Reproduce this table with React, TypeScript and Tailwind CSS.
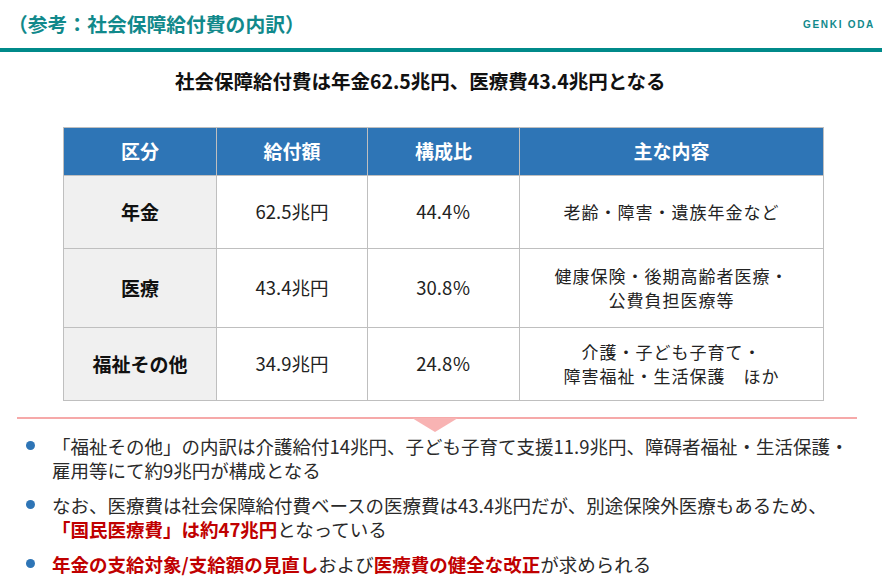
import React from "react";

const jp = { fontFamily: '"Noto Sans CJK JP", "Noto Sans", sans-serif' };

export default function App() {
  const rows = [
    { k: "年金", a: "62.5兆円", p: "44.4％", c: ["老齢・障害・遺族年金など"], h: "h-[73px]" },
    { k: "医療", a: "43.4兆円", p: "30.8％", c: ["健康保険・後期高齢者医療・", "公費負担医療等"], h: "h-[79px]" },
    { k: "福祉その他", a: "34.9兆円", p: "24.8％", c: ["介護・子ども子育て・", "障害福祉・生活保護　ほか"], h: "h-[73px]" },
  ];
  return (
    <div className="w-[882px] h-[576px] bg-white overflow-hidden text-[#222]" style={jp}>
      <div className="flex h-[48px] items-center justify-between pl-[8px] pr-[7px]">
        <div className="text-[19.8px] font-bold text-[#11898b]">（参考：社会保障給付費の内訳）</div>
        <div
          className="text-[10px] font-bold text-[#11898b] tracking-[1.7px] pt-[1px]"
          style={{ fontFamily: '"Liberation Sans", Arial, sans-serif' }}
        >
          GENKI ODA
        </div>
      </div>
      <div className="h-[4px] bg-[#008a8a]" />
      <div className="pt-[15px] pl-[175px] text-[19.5px] font-bold leading-[28px] text-[#111]">
        社会保障給付費は年金62.5兆円、医療費43.4兆円となる
      </div>
      <div className="pt-[32px] pl-[63px]">
        <table className="border-collapse w-[760px] table-fixed">
          <colgroup>
            <col className="w-[153px]" />
            <col className="w-[151px]" />
            <col className="w-[152px]" />
            <col className="w-[304px]" />
          </colgroup>
          <thead>
            <tr className="h-[48px] bg-[#2e75b6] text-white">
              {["区分", "給付額", "構成比", "主な内容"].map((t) => (
                <th key={t} className="border-[1.5px] border-[#bfbfbf] text-[19px] font-bold text-center">
                  {t}
                </th>
              ))}
            </tr>
          </thead>
          <tbody>
            {rows.map((r) => (
              <tr key={r.k} className={r.h}>
                <td className="border-[1.5px] border-[#bfbfbf] bg-[#f0f0f0] text-center text-[19px] font-bold text-[#111]">
                  {r.k}
                </td>
                <td className="border-[1.5px] border-[#bfbfbf] text-center text-[18.5px] text-[#222]">{r.a}</td>
                <td className="border-[1.5px] border-[#bfbfbf] text-center text-[18.5px] text-[#222]">{r.p}</td>
                <td className="border-[1.5px] border-[#bfbfbf] text-center text-[17px] leading-[24px] tracking-[1px] text-[#222]">
                  {r.c.map((l, i) => (
                    <div key={i}>{l}</div>
                  ))}
                </td>
              </tr>
            ))}
          </tbody>
        </table>
      </div>
      <div className="relative mt-[16px] ml-[17px] w-[840px] h-[2px] bg-[#f6a9a9]">
        <div className="absolute left-[395px] top-[1px] w-0 h-0 border-l-[23px] border-r-[23px] border-t-[14px] border-l-transparent border-r-transparent border-t-[#f8b3b3]" />
      </div>
      <div className="pt-[15px] pl-[26px] flex flex-col gap-[11px] text-[18.5px] leading-[24px] text-[#2a2a2a]">
        <div className="flex items-start">
          <span className="mt-[7px] w-[9px] h-[9px] rounded-full bg-[#2e75b6] shrink-0" />
          <div className="ml-[17px] whitespace-nowrap">
            「福祉その他」の内訳は介護給付14兆円、子ども子育て支援11.9兆円、障碍者福祉・生活保護・
            <br />
            雇用等にて約9兆円が構成となる
          </div>
        </div>
        <div className="flex items-start">
          <span className="mt-[7px] w-[9px] h-[9px] rounded-full bg-[#2e75b6] shrink-0" />
          <div className="ml-[17px] whitespace-nowrap">
            なお、医療費は社会保障給付費ベースの医療費は43.4兆円だが、別途保険外医療もあるため、
            <br />
            <span className="font-bold text-[#c00000]">「国民医療費」は約47兆円</span>となっている
          </div>
        </div>
        <div className="flex items-start">
          <span className="mt-[7px] w-[9px] h-[9px] rounded-full bg-[#2e75b6] shrink-0" />
          <div className="ml-[17px] whitespace-nowrap">
            <span className="font-bold text-[#c00000]">年金の支給対象/支給額の見直し</span>および
            <span className="font-bold text-[#c00000]">医療費の健全な改正</span>が求められる
          </div>
        </div>
      </div>
    </div>
  );
}
